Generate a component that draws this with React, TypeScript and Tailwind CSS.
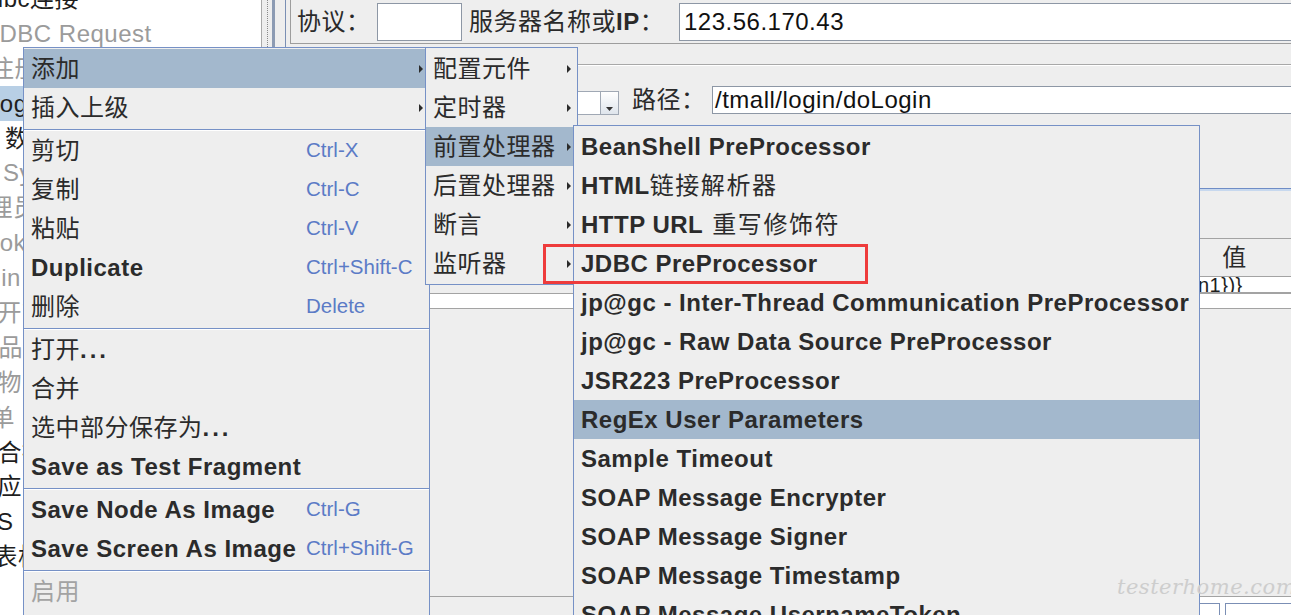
import React from "react";

type MI = {
  label: React.ReactNode;
  bold?: boolean;
  shortcut?: string;
  arrow?: boolean;
  hl?: boolean;
  disabled?: boolean;
};
type Entry = MI | "sep";

const Arrow = () => (
  <svg width="4" height="8" viewBox="0 0 4 8" className="shrink-0">
    <path d="M0 0 L4 4 L0 8 Z" fill="#2b2b2b" />
  </svg>
);

const Dots = () => <span className="font-bold tracking-[3px]">...</span>;

const mainItems: Entry[] = [
  { label: "添加", arrow: true, hl: true },
  { label: "插入上级", arrow: true },
  "sep",
  { label: "剪切", shortcut: "Ctrl-X" },
  { label: "复制", shortcut: "Ctrl-C" },
  { label: "粘贴", shortcut: "Ctrl-V" },
  { label: "Duplicate", bold: true, shortcut: "Ctrl+Shift-C" },
  { label: "删除", shortcut: "Delete" },
  "sep",
  {
    label: (
      <>
        打开<Dots />
      </>
    ),
  },
  { label: "合并" },
  {
    label: (
      <>
        选中部分保存为<Dots />
      </>
    ),
  },
  { label: "Save as Test Fragment", bold: true },
  "sep",
  { label: "Save Node As Image", bold: true, shortcut: "Ctrl-G" },
  { label: "Save Screen As Image", bold: true, shortcut: "Ctrl+Shift-G" },
  "sep",
  { label: "启用", disabled: true },
];

const sub1: MI[] = [
  { label: "配置元件" },
  { label: "定时器" },
  { label: "前置处理器", hl: true },
  { label: "后置处理器" },
  { label: "断言" },
  { label: "监听器" },
];

const sub2: MI[] = [
  { label: "BeanShell PreProcessor" },
  {
    label: (
      <>
        HTML<span className="font-normal tracking-[1.6px]">链接解析器</span>
      </>
    ),
  },
  {
    label: (
      <>
        HTTP URL<span className="ml-[9px] font-normal tracking-[1.6px]">重写修饰符</span>
      </>
    ),
  },
  { label: "JDBC PreProcessor" },
  { label: "jp@gc - Inter-Thread Communication PreProcessor" },
  { label: "jp@gc - Raw Data Source PreProcessor" },
  { label: "JSR223 PreProcessor" },
  { label: "RegEx User Parameters", hl: true },
  { label: "Sample Timeout" },
  { label: "SOAP Message Encrypter" },
  { label: "SOAP Message Signer" },
  { label: "SOAP Message Timestamp" },
  { label: "SOAP Message UsernameToken" },
];

const treeRows: { t: string; ml: string; gray?: boolean; sel?: boolean }[] = [
  { t: "jdbc连接", ml: "-ml-[16px]" },
  { t: "JDBC Request", ml: "-ml-[13px]", gray: true },
  { t: "注册", ml: "-ml-[10px]", gray: true },
  { t: "login", ml: "-ml-[6px]", sel: true },
  { t: "数据准备", ml: "ml-[5px]" },
  { t: "SyncTimer", ml: "ml-[3px]", gray: true },
  { t: "管理员", ml: "-ml-[36px]", gray: true },
  { t: "Cookie管理器", ml: "-ml-[32px]", gray: true },
  { t: "admin", ml: "-ml-[47px]", gray: true },
  { t: "打开首页", ml: "-ml-[27px]", gray: true },
  { t: "商品查询", ml: "-ml-[26px]", gray: true },
  { t: "购物车", ml: "-ml-[27px]", gray: true },
  { t: "提交订单", ml: "-ml-[83px]", gray: true },
  { t: "组合接口", ml: "-ml-[27px]" },
  { t: "响应时间", ml: "-ml-[27px]" },
  { t: "S", ml: "-ml-[3px]" },
  { t: "用表格察看结果", ml: "-ml-[31px]" },
];

function Sep() {
  return (
    <div className="h-[4px] pt-[2px]">
      <div className="h-px bg-[#7691c6]" />
      <div className="h-px bg-white" />
    </div>
  );
}

export default function App() {
  return (
    <div className="relative h-[615px] w-[1291px] overflow-hidden bg-[#eeeeee] font-['Liberation_Sans','Noto_Sans_CJK_SC',sans-serif] text-[24px] leading-none tracking-[0.5px] text-[#222222]">
      <div className="flex h-full">
        {/* Tree panel */}
        <div className="w-[261px] shrink-0 overflow-hidden bg-white">
          <div className="-mt-[18.5px]">
            {treeRows.map((r, i) => (
              <div
                key={i}
                className={`flex h-[34.9px] items-center whitespace-nowrap ${r.sel ? "bg-[#b8cfe5]" : ""}`}
              >
                <span className={`${r.ml} ${r.gray ? "text-[#9b9b9b]" : "text-[#1e1e1e]"}`}>{r.t}</span>
              </div>
            ))}
          </div>
        </div>

        {/* Splitter */}
        <div className="flex w-[24px] shrink-0">
          <div className="w-px bg-[#a9a9a9]" />
          <div className="w-[5px]" />
          <div className="w-px border-l border-dotted border-[#8a8a8a]" />
          <div className="w-[4px]" />
          <div className="w-[3px] bg-[#8c9bb3]" />
          <div className="w-[10px]" />
        </div>

        {/* Right panel */}
        <div className="flex min-w-0 flex-1 flex-col overflow-hidden border-l border-[#7a8fb4] pl-[4px]">
          <div className="flex h-[44px] shrink-0 items-center border-b border-l border-[#9d9d9d] pl-[6px] text-[#2a2a2a]">
            <span className="w-[80px] shrink-0 whitespace-nowrap">协议：</span>
            <div className="h-[38px] w-[85px] shrink-0 border border-[#8d97a5] bg-white" />
            <span className="ml-[7px] w-[210px] shrink-0 whitespace-nowrap">
              服务器名称或<span className="font-bold">IP</span>：
            </span>
            <div className="flex h-[38px] w-[640px] shrink-0 items-center border border-[#8d97a5] bg-white pl-[4px] text-[#111]">
              123.56.170.43
            </div>
          </div>

          <div className="mt-[20px] h-px shrink-0 bg-[#a8a8a8]" />
          <div className="h-px shrink-0 bg-white" />

          <div className="flex shrink-0 items-start pl-[7px] pt-[20px] text-[#2a2a2a]">
            <span className="flex h-[28px] w-[73px] shrink-0 items-center whitespace-nowrap">方法：</span>
            <div className="mt-[5px] flex h-[24px] w-[249px] shrink-0 border border-[#a0a8b4] bg-white">
              <div className="flex-1" />
              <div className="flex w-[18px] items-end justify-center border-l border-[#a0a8b4] bg-gradient-to-b from-white to-[#dfe5ec] pb-[3px]">
                <svg width="7" height="4" viewBox="0 0 7 4">
                  <path d="M0 0 L7 0 L3.5 4 Z" fill="#333" />
                </svg>
              </div>
            </div>
            <span className="ml-[13px] flex h-[28px] w-[80px] shrink-0 items-center whitespace-nowrap">路径：</span>
            <div className="flex h-[28px] w-[620px] shrink-0 items-center border border-[#8d97a5] bg-white pl-[2px] text-[#111]">
              /tmall/login/doLogin
            </div>
          </div>

          <div className="mt-[73px] h-px shrink-0 bg-[#6f8dc6]" />
          <div className="h-[2px] shrink-0 bg-[#c7d8ee]" />

          <div className="mt-[47px] flex h-[39px] shrink-0 border-b border-t border-[#a3a3a3] text-[#2a2a2a]">
            <div className="flex-1 border-r border-[#a3a3a3]" />
            <div className="flex w-[113px] shrink-0 items-center justify-center">值</div>
          </div>
          <div className="flex h-[16px] shrink-0 text-[20px]">
            <div className="flex-1 border-r border-[#a3a3a3]" />
            <div className="flex w-[113px] shrink-0 items-center overflow-hidden whitespace-nowrap border-b border-[#a3a3a3] bg-white pl-[20px] text-[#1e1e1e]">
              n1{"})}"}
            </div>
          </div>
          <div className="flex h-[16px] shrink-0 border-b border-t border-[#a3a3a3] bg-white">
            <div className="flex-1 border-r border-[#a3a3a3]" />
            <div className="w-[113px] shrink-0" />
          </div>
          <div className="flex-1" />
          <div className="flex h-[19px] shrink-0 border-t border-[#a3a3a3]">
            <div className="flex-1" />
            <div className="flex w-[111px] shrink-0 gap-[5px] bg-white pt-[6px]">
              <div className="w-[40px] border-l border-r border-t border-[#7b8fb5] bg-white" />
              <div className="flex-1 border-l border-t border-[#7b8fb5] bg-white" />
            </div>
          </div>
        </div>
      </div>

      {/* Main context menu */}
      <div className="absolute left-[23px] top-[47px] h-[580px] w-[407px] border border-[#7691c6] bg-[#eeeeee] pt-px">
        {mainItems.map((it, i) =>
          it === "sep" ? (
            <Sep key={i} />
          ) : (
            <div
              key={i}
              className={`flex h-[39px] items-center pl-[7px] pr-[6px] ${it.hl ? "bg-[#a3b8cd]" : ""}`}
            >
              <span
                className={`w-[275px] shrink-0 whitespace-nowrap ${it.bold ? "font-bold" : ""} ${it.disabled ? "text-[#a3a3a3]" : "text-[#2b2b2b]"}`}
              >
                {it.label}
              </span>
              {it.shortcut && (
                <span className="whitespace-nowrap text-[20.5px] tracking-normal text-[#5b7bc6]">{it.shortcut}</span>
              )}
              {it.arrow && (
                <span className="ml-auto">
                  <Arrow />
                </span>
              )}
            </div>
          )
        )}
      </div>

      {/* Submenu 1 */}
      <div className="absolute left-[425px] top-[47px] w-[153px] border border-[#7691c6] bg-[#eeeeee] pb-px pt-px">
        {sub1.map((it, i) => (
          <div
            key={i}
            className={`flex h-[39px] items-center pl-[7px] pr-[6px] text-[#2b2b2b] ${it.hl ? "bg-[#a3b8cd]" : ""}`}
          >
            <span className="flex-1 whitespace-nowrap">{it.label}</span>
            <Arrow />
          </div>
        ))}
      </div>

      {/* Submenu 2 */}
      <div className="absolute left-[573px] top-[125px] h-[520px] w-[627px] border border-[#7691c6] bg-[#eeeeee] pt-px">
        {sub2.map((it, i) => (
          <div
            key={i}
            className={`flex h-[39px] items-center whitespace-nowrap pl-[7px] font-bold text-[#2b2b2b] ${it.hl ? "bg-[#a3b8cd]" : ""}`}
          >
            {it.label}
          </div>
        ))}
      </div>

      {/* Red highlight annotation */}
      <div className="absolute left-[543px] top-[244px] h-[40px] w-[325px] border-[3px] border-[#ee3b3b]" />

      {/* Watermark */}
      <div className="absolute left-[1117px] top-[577px] whitespace-nowrap font-['DejaVu_Serif',serif] text-[21px] italic tracking-[0.5px] text-[#cdcdcd]">
        testerhome.com
      </div>
    </div>
  );
}
